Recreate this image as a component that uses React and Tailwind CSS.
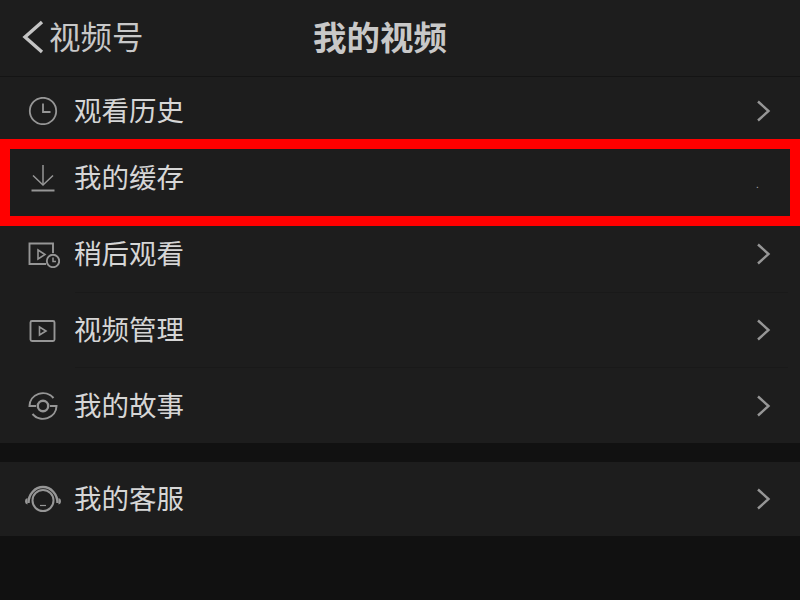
import React from "react";

const cjk = "font-['Noto_Sans_CJK_SC','Liberation_Sans',sans-serif]";

const Chevron = () => (
  <svg width="16" height="22" viewBox="0 0 16 22" fill="none" stroke="#969696" strokeWidth="2.4">
    <path d="M2 1.5 L12.5 11 L2 20.5" />
  </svg>
);

const ClockIcon = () => (
  <svg width="32" height="28" viewBox="0 0 32 28" fill="none" stroke="#969696" strokeWidth="1.8">
    <circle cx="16" cy="14" r="13.2" />
    <path d="M16 6.5 V15 H23.5" />
  </svg>
);

const DownloadIcon = () => (
  <svg width="32" height="28" viewBox="0 0 32 28" fill="none" stroke="#969696" strokeWidth="1.5">
    <path d="M16 1 V20" />
    <path d="M6 11.5 L16 21 L26 11.5" />
    <path d="M4.5 26.5 H27.5" strokeWidth="2" />
  </svg>
);

const WatchLaterIcon = () => (
  <svg width="34" height="28" viewBox="0 0 34 28" fill="none" stroke="#969696" strokeWidth="1.9">
    <path d="M20 24 H3.5 V3.5 H27 V13" />
    <path d="M12 10 L19 14.5 L12 19 Z" strokeWidth="1.6" />
    <circle cx="27" cy="21" r="6.2" />
    <path d="M27 17.5 V21.5 H30" strokeWidth="1.5" />
  </svg>
);

const VideoIcon = () => (
  <svg width="32" height="28" viewBox="0 0 32 28" fill="none" stroke="#969696" strokeWidth="1.9">
    <rect x="3.5" y="4" width="24" height="20" rx="1.5" />
    <path d="M12.5 10 L19 14 L12.5 18 Z" strokeWidth="1.6" />
  </svg>
);

const StoryIcon = () => (
  <svg width="32" height="28" viewBox="0 0 32 28" fill="none" stroke="#969696" strokeWidth="2">
    <path d="M9 14 H2.5 A13.5 13 0 0 1 26.5 6" />
    <path d="M23 14 H29.5 A13.5 13 0 0 1 5.5 22" />
    <circle cx="16" cy="14" r="5.2" strokeWidth="2.4" />
  </svg>
);

const ServiceIcon = () => (
  <svg width="38" height="28" viewBox="0 0 38 28" fill="none" stroke="#969696" strokeWidth="2.4">
    <path d="M4.5 18 A14.5 16 0 0 1 33.5 18" />
    <circle cx="19" cy="15.5" r="10.5" strokeWidth="2" />
    <path d="M1 16 Q1 13.5 3.5 13 V19.5 Q1 19 1 16 Z" fill="#969696" stroke="none" />
    <path d="M37 16 Q37 13.5 34.5 13 V19.5 Q37 19 37 16 Z" fill="#969696" stroke="none" />
    <path d="M16 20.5 H22" strokeWidth="1.2" />
  </svg>
);

const Row = ({ icon, label, height, divider, chevron = true }) => (
  <div className={`flex items-center pr-[12px] ${height}`}>
    <div className="w-[75px] flex justify-center shrink-0 pl-[11px]">{icon}</div>
    <div className={`flex-1 h-full flex items-center justify-between pr-[16px] ${divider ? "border-b border-[#191919]" : ""}`}>
      <span className="text-[27.5px] leading-none text-[#d6d6d6] pb-[2px] -ml-[1px]">{label}</span>
      {chevron ? <Chevron /> : <span className="w-[16px] pt-[10px] text-[10px] text-[#aaa]">.</span>}
    </div>
  </div>
);

export default function App() {
  return (
    <div className={`relative w-[800px] h-[600px] overflow-hidden bg-[#111111] ${cjk}`}>
      <div className="relative h-[77px] flex items-center justify-center pr-[40px] bg-[#1d1d1d] border-b border-[#141414]">
        <div className="absolute left-[21px] top-[20px] flex items-center gap-[4px]">
          <svg width="24" height="34" viewBox="0 0 24 34" fill="none" stroke="#c4c4c4" strokeWidth="3.4">
            <path d="M21 2 L4 17 L21 32" />
          </svg>
          <span className="text-[31.5px] leading-none text-[#c8c8c8] pb-[2px]">视频号</span>
        </div>
        <span className="text-[33.5px] leading-none font-bold text-[#c8c8c8] pb-[5px]">我的视频</span>
      </div>

      <div className="bg-[#1d1d1d]">
        <Row icon={<ClockIcon />} label="观看历史" height="h-[68px]" />
        <Row icon={<DownloadIcon />} label="我的缓存" height="h-[66px]" chevron={false} />
        <Row icon={<WatchLaterIcon />} label="稍后观看" height="h-[82px] pt-[4px]" divider />
        <Row icon={<VideoIcon />} label="视频管理" height="h-[75px]" divider />
        <Row icon={<StoryIcon />} label="我的故事" height="h-[75px]" />
      </div>

      <div className="mt-[19px] bg-[#1d1d1d]">
        <Row icon={<ServiceIcon />} label="我的客服" height="h-[74px]" />
      </div>

      <div className="absolute left-0 top-[139px] w-[800px] h-[87px] border-[10px] border-[#ff0000]" />
    </div>
  );
}
